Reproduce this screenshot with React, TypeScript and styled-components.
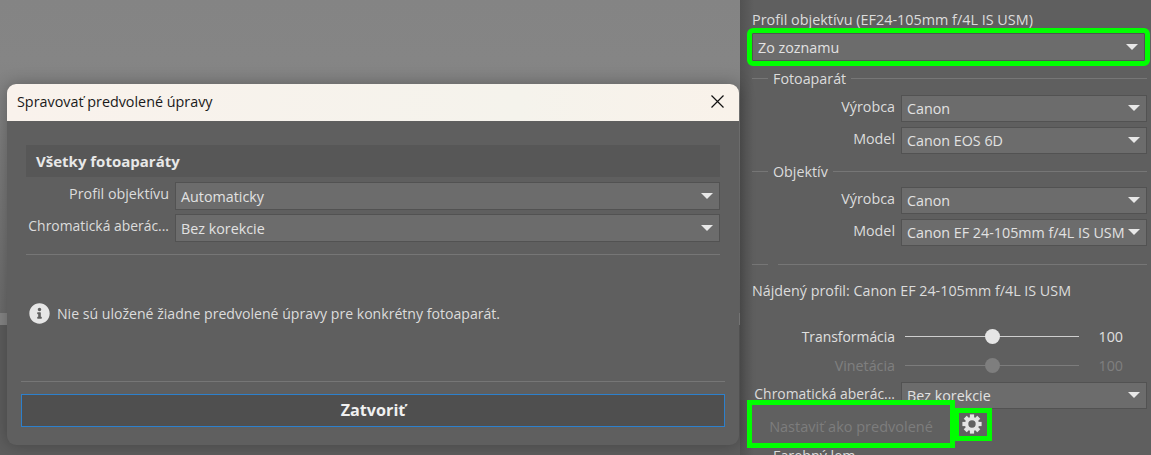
import React from "react";
import styled, { createGlobalStyle } from "styled-components";
import { FaInfoCircle } from "react-icons/fa";

const Global = createGlobalStyle`
  html, body { margin: 0; padding: 0; background: #5f5f5f; }
  body { width: 1151px; height: 455px; overflow: hidden; font-family: "Open Sans", "Liberation Sans", sans-serif; }
  #root { width: 1151px; height: 455px; }
`;

const Page = styled.div`
  display: flex;
  width: 1151px;
  height: 455px;
  overflow: hidden;
  color: #dedede;
  font-size: 14.3px;
`;

const Canvas = styled.div`
  position: relative;
  flex: 0 0 740px;
  display: flex;
  flex-direction: column;
`;

const Preview = styled.div`
  flex: 0 0 313px;
  background: linear-gradient(#848484 0, #858585 60px, #7a7a7a 160px, #6c6c6c 313px);
`;

const FilmBar = styled.div`
  flex: 0 0 12px;
  background: #858585;
`;

const FilmStrip = styled.div`
  flex: 1;
  background: #5d5d5d;
`;

const Dialog = styled.section`
  position: absolute;
  left: 7px;
  top: 84px;
  width: 732px;
  height: 361px;
  display: flex;
  flex-direction: column;
  background: #5f5f5f;
  border-radius: 9px;
  overflow: hidden;
  box-shadow: 0 0 16px rgba(0, 0, 0, 0.28);
`;

const TitleBar = styled.header`
  flex: 0 0 37px;
  box-sizing: border-box;
  display: flex;
  align-items: center;
  justify-content: space-between;
  padding: 0 15px 2px 10px;
  background: linear-gradient(90deg, #f9f2ec, #f5f3ec 70%, #f9f2ea);
  color: #1a1a1a;
  font-size: 14.35px;
`;

const CloseIcon = styled.svg`
  width: 13px;
  height: 13px;
  display: block;
`;

const DialogBody = styled.div`
  flex: 1;
  display: flex;
  flex-direction: column;
  padding: 24px 14px 0;
`;

const Section = styled.div`
  margin: 0 5px;
  display: flex;
  flex-direction: column;
`;

const SectionHead = styled.h2`
  margin: 0 0 5px;
  height: 32px;
  box-sizing: border-box;
  padding: 0 0 1px 10px;
  display: flex;
  align-items: center;
  background: #575757;
  color: #e8e8e8;
  font-size: 15px;
  font-weight: 700;
`;

const Row = styled.div<{ $gap?: number; $labelWidth: number }>`
  display: grid;
  grid-template-columns: ${(p) => p.$labelWidth}px 1fr;
  column-gap: 6px;
  align-items: center;
  margin-bottom: ${(p) => p.$gap ?? 4}px;
`;

const Label = styled.label<{ $tight?: boolean }>`
  display: flex;
  justify-content: flex-end;
  white-space: nowrap;
  color: #dcdcdc;
  line-height: 24px;
  align-self: start;
  font-size: ${(p) => (p.$tight ? "13.9px" : "inherit")};
`;

const SelectBox = styled.div<{ $h?: number }>`
  height: ${(p) => p.$h ?? 28}px;
  box-sizing: border-box;
  display: flex;
  align-items: center;
  justify-content: space-between;
  padding: 0 6px 0 5px;
  background: #6c6c6c;
  border: 1px solid #525252;
  color: #e2e2e2;
  white-space: nowrap;
`;

const Caret = styled.span`
  flex: none;
  width: 0;
  height: 0;
  margin-top: -1px;
  border-left: 6px solid transparent;
  border-right: 6px solid transparent;
  border-top: 6px solid #e8e8e8;
`;

const Rule = styled.hr<{ $mt: number; $mb: number }>`
  margin: ${(p) => p.$mt}px 0 ${(p) => p.$mb}px;
  border: 0;
  height: 1px;
  background: #767676;
`;

const Notice = styled.p`
  margin: 0 5px;
  display: flex;
  align-items: center;
  gap: 7px;
  padding-left: 3px;
  height: 20px;
  color: #dcdcdc;
  font-size: 14.1px;
  svg { flex: none; color: #e6e6e6; }
`;

const CloseButton = styled.button`
  margin-top: 12px;
  height: 33px;
  border: 1px solid #2d80cc;
  background: #4f4f4f;
  color: #f0f0f0;
  font: 700 16.2px "Open Sans", "Liberation Sans", sans-serif;
  padding: 0 0 1px;
`;

const Panel = styled.aside`
  flex: 0 0 411px;
  box-sizing: border-box;
  height: 455px;
  overflow: hidden;
  padding: 11px 4px 0 12px;
  background: linear-gradient(90deg, #525252 0, #5f5f5f 14px);
`;

const PanelLabel = styled.div`
  line-height: 18px;
  color: #dcdcdc;
  margin-bottom: 4px;
  font-size: 14.4px;
`;

const MainSelect = styled(SelectBox)`
  height: 28px;
  margin-right: 2px;
  outline: 5px solid #00ff00;
  border-radius: 1px;
`;

const Group = styled.div<{ $mt: number; $mb: number }>`
  display: flex;
  align-items: center;
  margin: ${(p) => p.$mt}px 0 ${(p) => p.$mb}px;
  height: 18px;
  color: #dcdcdc;
  &::before, &::after {
    content: "";
    height: 1px;
    background: #767676;
  }
  &::before { flex: 0 0 16px; margin-right: 5px; }
  &::after { flex: 1; margin-left: 5px; }
`;

const SplitRule = styled.div`
  display: flex;
  gap: 10px;
  height: 1px;
  margin: 18px 0 17px;
  &::before, &::after { content: ""; background: #767676; }
  &::before { flex: 0 0 16px; }
  &::after { flex: 1; }
`;

const Found = styled.div`
  line-height: 18px;
  color: #dcdcdc;
  margin-bottom: 27px;
`;

const SliderRow = styled.div<{ $dim?: boolean; $mb: number }>`
  display: grid;
  grid-template-columns: 143px 174px 1fr;
  column-gap: 10px;
  align-items: center;
  height: 18px;
  margin-bottom: ${(p) => p.$mb}px;
  color: ${(p) => (p.$dim ? "#7f7f7f" : "#e0e0e0")};
`;

const SliderLabel = styled.span<{ $tight?: boolean }>`
  text-align: right;
  font-size: ${(p) => (p.$tight ? "13.9px" : "inherit")};
`;

const Track = styled.div<{ $dim?: boolean }>`
  position: relative;
  height: 1px;
  background: ${(p) => (p.$dim ? "#7c7c7c" : "#cfcfcf")};
`;

const Thumb = styled.span<{ $dim?: boolean }>`
  position: absolute;
  top: -7px;
  left: 80px;
  width: 15px;
  height: 15px;
  border-radius: 50%;
  background: ${(p) => (p.$dim ? "#7e7e7e" : "#e6e6e6")};
`;

const SliderValue = styled.span`
  text-align: right;
  padding-right: 24px;
`;

const ActionRow = styled.div`
  display: flex;
  margin-top: -4px;
  height: 38px;
  position: relative;
`;

const DefaultButton = styled.button`
  width: 198px;
  height: 38px;
  padding: 4px 0 0;
  margin: 0;
  background: #606060;
  border: 0;
  outline: 5px solid #00ff00;
  color: #7d7d7d;
  font: 14.5px "Open Sans", "Liberation Sans", sans-serif;
`;

const GearButton = styled.button`
  width: 28px;
  height: 23px;
  margin: 8px 0 0 9px;
  padding: 0 3px 1px 0;
  display: flex;
  align-items: center;
  justify-content: center;
  background: #606060;
  border: 0;
  outline: 5px solid #00ff00;
`;

const Trailing = styled.div`
  margin: 4px 0 0 21px;
  color: #dcdcdc;
  line-height: 18px;
`;

const Gear = () => (
  <svg width="20" height="20" viewBox="0 0 20 20" aria-hidden="true">
    <circle cx="10" cy="10" r="5.4" fill="none" stroke="#e4e4e4" strokeWidth="3.4" />
    {[0, 45, 90, 135, 180, 225, 270, 315].map((a) => (
      <rect key={a} x="7.9" y="0.4" width="4.2" height="4" fill="#e4e4e4" transform={`rotate(${a} 10 10)`} />
    ))}
  </svg>
);

const Select = ({ value, h }: { value: string; h?: number }) => (
  <SelectBox $h={h}>
    <span>{value}</span>
    <Caret />
  </SelectBox>
);

export default function App() {
  return (
    <>
      <Global />
      <Page>
        <Canvas>
          <Preview />
          <FilmBar />
          <FilmStrip />
          <Dialog>
            <TitleBar>
              <span>Spravovať predvolené úpravy</span>
              <CloseIcon viewBox="0 0 13 13">
                <path d="M.5.5l12 12M12.5.5l-12 12" stroke="#111" strokeWidth="1.2" fill="none" />
              </CloseIcon>
            </TitleBar>
            <DialogBody>
              <Section>
                <SectionHead>Všetky fotoaparáty</SectionHead>
                <Row $labelWidth={143}>
                  <Label>Profil objektívu</Label>
                  <Select value="Automaticky" />
                </Row>
                <Row $labelWidth={143} $gap={0}>
                  <Label $tight>Chromatická aberác...</Label>
                  <Select value="Bez korekcie" />
                </Row>
                <Rule $mt={12} $mb={48} />
              </Section>
              <Notice>
                <FaInfoCircle size={21} />
                Nie sú uložené žiadne predvolené úpravy pre konkrétny fotoaparát.
              </Notice>
              <Rule $mt={58} $mb={0} />
              <CloseButton>Zatvoriť</CloseButton>
            </DialogBody>
          </Dialog>
        </Canvas>
        <Panel>
          <PanelLabel>Profil objektívu (EF24-105mm f/4L IS USM)</PanelLabel>
          <MainSelect>
            <span>Zo zoznamu</span>
            <Caret />
          </MainSelect>
          <Group $mt={8} $mb={8}>Fotoaparát</Group>
          <Row $labelWidth={143} $gap={5}>
            <Label>Výrobca</Label>
            <Select value="Canon" h={27} />
          </Row>
          <Row $labelWidth={143} $gap={8}>
            <Label>Model</Label>
            <Select value="Canon EOS 6D" h={27} />
          </Row>
          <Group $mt={0} $mb={7}>Objektív</Group>
          <Row $labelWidth={143} $gap={5}>
            <Label>Výrobca</Label>
            <Select value="Canon" h={27} />
          </Row>
          <Row $labelWidth={143} $gap={0}>
            <Label>Model</Label>
            <Select value="Canon EF 24-105mm f/4L IS USM" h={27} />
          </Row>
          <SplitRule />
          <Found>Nájdený profil: Canon EF 24-105mm f/4L IS USM</Found>
          <SliderRow $mb={11}>
            <SliderLabel $tight>Transformácia</SliderLabel>
            <Track><Thumb /></Track>
            <SliderValue>100</SliderValue>
          </SliderRow>
          <SliderRow $dim $mb={8}>
            <SliderLabel>Vinetácia</SliderLabel>
            <Track $dim><Thumb $dim /></Track>
            <SliderValue>100</SliderValue>
          </SliderRow>
          <Row $labelWidth={143} $gap={0}>
            <Label $tight>Chromatická aberác...</Label>
            <Select value="Bez korekcie" h={27} />
          </Row>
          <ActionRow>
            <DefaultButton>Nastaviť ako predvolené</DefaultButton>
            <GearButton><Gear /></GearButton>
          </ActionRow>
          <Trailing>Farebný lem</Trailing>
        </Panel>
      </Page>
    </>
  );
}
